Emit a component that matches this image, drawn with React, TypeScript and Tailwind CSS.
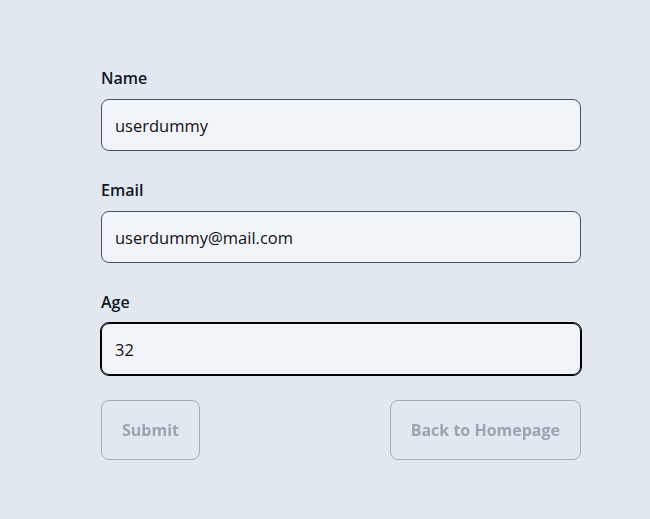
import React from "react";

const fields = [
  { label: "Name", value: "userdummy", type: "text" },
  { label: "Email", value: "userdummy@mail.com", type: "email" },
  { label: "Age", value: "32", type: "number", active: true },
];

const App: React.FC = () => {
  return (
    <div
      className="min-h-[519px] w-full bg-[#e2e8f0] pt-[66px]"
      style={{ fontFamily: "'Open Sans', Lato, sans-serif" }}
    >
      <form className="ml-[101px] w-[480px]" onSubmit={(e) => e.preventDefault()}>
        {fields.map((f) => (
          <div key={f.label} className="mb-[27px]">
            <label className="block text-[16px] font-semibold leading-6 text-[#111827] mb-[9px]">
              {f.label}
            </label>
            <input
              type="text"
              defaultValue={f.value}
              autoFocus={f.active}
              className={
                f.active
                  ? "block w-full h-[52px] rounded-lg bg-[#f1f5f9] px-[13px] text-[16.5px] text-[#111] border border-black outline outline-1 outline-black"
                  : "block w-full h-[52px] rounded-lg bg-[#f1f5f9] px-[13px] text-[16.5px] text-[#111] border border-[#475569] focus:outline-none"
              }
            />
          </div>
        ))}
        <div className="flex justify-between -mt-[2px]">
          <button
            type="submit"
            disabled
            className="h-[60px] px-5 rounded-lg border border-[#a3aab8] text-[16px] font-bold text-[#9ca3af]"
          >
            Submit
          </button>
          <button
            type="button"
            disabled
            className="h-[60px] px-5 rounded-lg border border-[#a3aab8] text-[16px] font-bold text-[#9ca3af]"
          >
            Back to Homepage
          </button>
        </div>
      </form>
    </div>
  );
};

export default App;
